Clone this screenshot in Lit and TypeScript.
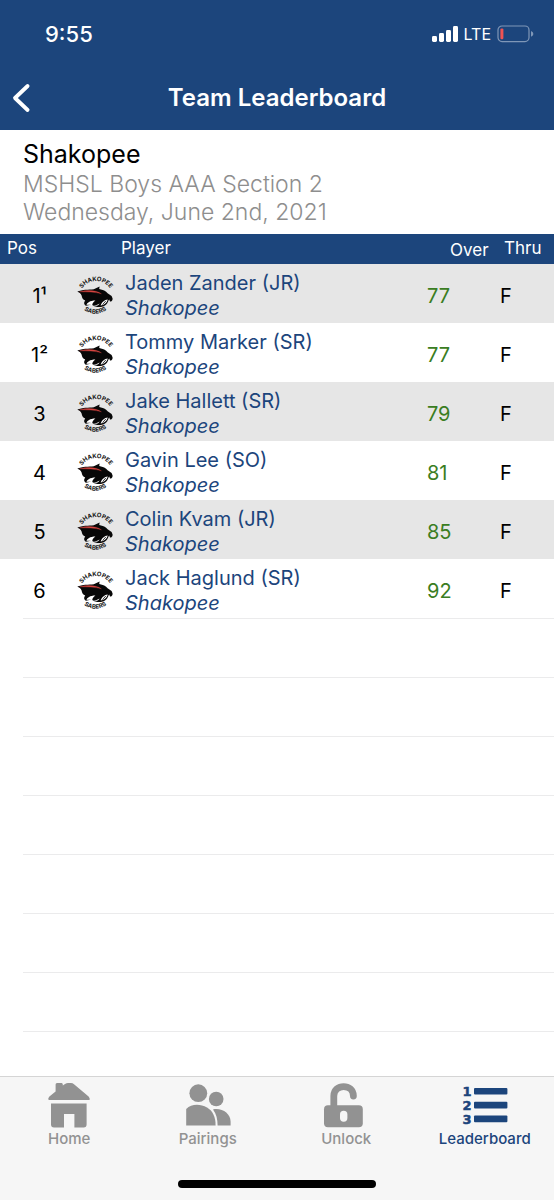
import { LitElement, html, css, svg } from "lit";
import { customElement, property } from "lit/decorators.js";

interface Player {
  pos: string;
  tie?: string;
  name: string;
  team: string;
  over: number;
  thru: string;
}

const PLAYERS: Player[] = [
  { pos: "1", tie: "¹", name: "Jaden Zander (JR)", team: "Shakopee", over: 77, thru: "F" },
  { pos: "1", tie: "²", name: "Tommy Marker (SR)", team: "Shakopee", over: 77, thru: "F" },
  { pos: "3", name: "Jake Hallett (SR)", team: "Shakopee", over: 79, thru: "F" },
  { pos: "4", name: "Gavin Lee (SO)", team: "Shakopee", over: 81, thru: "F" },
  { pos: "5", name: "Colin Kvam (JR)", team: "Shakopee", over: 85, thru: "F" },
  { pos: "6", name: "Jack Haglund (SR)", team: "Shakopee", over: 92, thru: "F" },
];

@customElement("team-logo")
class TeamLogo extends LitElement {
  static styles = css`
    :host { display: block; width: 36px; height: 38px; flex: none; }
    svg { display: block; overflow: visible; }
    .word { font: 700 6px "Inter", sans-serif; fill: #111; text-anchor: middle; }
  `;
  render() {
    return html`<svg width="36" height="38" viewBox="0 0 36 38" aria-hidden="true">
      <path id="top" d="M3.6 14.4 A16.6 16.6 0 0 1 34.4 14.4" fill="none" />
      <path id="bottom" d="M4.6 30.6 A18.4 18.4 0 0 0 32 30.6" fill="none" />
      <text class="word"><textPath href="#top" startOffset="50%">SHAKOPEE</textPath></text>
      <text class="word"><textPath href="#bottom" startOffset="50%">SABERS</textPath></text>
      <path
        d="M0.3 14.6 C5 12.4 12 12.8 16.8 12.2 L22.6 9.4 L22.2 12 C26 12.6 29 14.2 30.6 16.2 L34.6 19 L35.6 21.4 C35.8 23.4 34.6 24.6 33 24.6 L32.2 22.6 C31 24 30.8 27.4 27.6 28.8 C24.2 30.6 19 30.6 15 28 C19 29.4 21.6 28.6 22.6 26.4 C19 29 14.6 28 13.4 27.8 L9 28.8 C6.4 27.4 7 25.2 8.2 23.6 C6 23 5 21.2 4.6 18.6 C3.8 16.4 2 15.4 0.3 14.6 Z"
        fill="#080808" />
      <path d="M9.6 28 C9.8 26 13 23.6 18.4 23.6 C16 25.4 15.2 27 15.2 28.4 C12.6 27.6 11 27.8 9.6 28 Z" fill="#fff" />
      <path d="M30.8 22.4 C27.4 22.6 24.6 25.2 23.6 28.6 C26.8 28 29.8 26 30.8 22.4 Z" fill="#fff" />
      <path d="M28.9 23.9 L25.6 27.6" stroke="#080808" stroke-width="0.8" />
      <path d="M2.6 14.8 C10 12.8 19 13 24.4 16.8 C18 14.8 10 15 2.6 14.8 Z" fill="#d5443f" stroke="#d5443f" stroke-width="0.3" />
    </svg>`;
  }
}

const homeIcon = svg`<svg width="46" height="46" viewBox="0 0 46 46" aria-hidden="true" fill="#929292">
  <path d="M11 1 H15.6 Q16.8 1 16.8 2.6 V3.6 L19 2 Q20.6 1 22 1 H25 Q26.6 1 28 2.2 L42.6 14.4 Q44.2 16 43.6 18 H2.6 Q1.6 16.2 3.4 14.6 L9.6 9.4 V2.6 Q9.6 1 11 1 Z" />
  <path d="M5 21.4 H40.6 V42.4 Q40.6 45.4 37.6 45.4 H28.4 V32 H18 V45.4 H8 Q5 45.4 5 42.4 Z" />
</svg>`;

const pairingsIcon = svg`<svg width="46" height="46" viewBox="0 0 46 46" aria-hidden="true" fill="#929292">
  <circle cx="13.3" cy="11.2" r="8.9" />
  <circle cx="31.2" cy="17" r="7.3" />
  <path d="M1.2 43.6 V27 C6.4 21.8 15 21.6 22 25.6 C28 29.2 30.6 35 30.6 43.6 Z" />
  <path d="M28 27.4 C37 25.6 45.6 31.6 45.6 39.4 V43.6 H32.6 C32.6 37 31.4 31.8 28 27.4 Z" />
</svg>`;

const unlockIcon = svg`<svg width="46" height="46" viewBox="0 0 46 46" aria-hidden="true">
  <path d="M10.8 26 V14 C10.8 1.4 30.4 1.4 30.4 14" fill="none" stroke="#929292" stroke-width="6.8" stroke-linecap="round" />
  <rect x="1" y="23.2" width="38.8" height="22" rx="4" fill="#929292" />
  <rect x="17" y="28.8" width="7.4" height="11" rx="3.7" fill="#f6f6f6" />
</svg>`;

const leaderboardIcon = svg`<svg width="46" height="46" viewBox="0 0 46 46" aria-hidden="true" fill="#1c457c">
  <g font-family="DejaVu Sans, sans-serif" font-weight="700" font-size="13" stroke="#1c457c" stroke-width="0.5" text-anchor="middle">
    <text x="5" y="14">1</text><text x="5" y="28">2</text><text x="5" y="42">3</text>
  </g>
  <rect x="12" y="6" width="33.4" height="6.6" rx="1" />
  <rect x="12" y="19.8" width="33.4" height="6.6" rx="1" />
  <rect x="12" y="33.6" width="33.4" height="6.6" rx="1" />
</svg>`;

const TABS = [
  { label: "Home", icon: homeIcon },
  { label: "Pairings", icon: pairingsIcon },
  { label: "Unlock", icon: unlockIcon },
  { label: "Leaderboard", icon: leaderboardIcon, active: true },
];

@customElement("app-root")
class AppRoot extends LitElement {
  @property({ attribute: false }) players = PLAYERS;

  static styles = css`
    :host {
      display: flex;
      flex-direction: column;
      min-height: 100vh;
      background: #fff;
      color: #000;
      font-family: "Inter", sans-serif;
    }
    .top { padding-bottom: 2px; background: #1c457c; color: #fff; }
    .status {
      display: flex;
      justify-content: space-between;
      align-items: center;
      height: 68px;
      padding: 0 20px 0 45px;
    }
    .time { font-size: 22px; font-weight: 500; }
    .signals { display: flex; align-items: center; gap: 6px; font-size: 16px; }
    .signals svg { display: block; }
    .nav {
      display: grid;
      grid-template-columns: 44px 1fr 44px;
      align-items: center;
      height: 60px;
    }
    .back {
      display: flex;
      padding: 0 0 0 12px;
      border: 0;
      background: none;
    }
    h1 { margin: 0; text-align: center; font-size: 24px; line-height: 30px; font-weight: 600; }
    .event { padding: 8px 23px; font-size: 23px; line-height: 28px; font-weight: 300; color: #8e8e8e; }
    h2 { margin: 0; font-size: 25px; line-height: 32px; font-weight: 400; color: #000; }
    p { margin: 0; }
    table { width: 100%; table-layout: fixed; border-collapse: collapse; }
    .c-pos { width: 77px; }
    .c-over { width: 73px; }
    .c-thru { width: 54px; }
    th {
      height: 28px;
      padding: 0 0 2px;
      background: #1c457c;
      color: #fff;
      font-size: 17px;
      line-height: 20px;
      font-weight: 400;
      text-align: left;
    }
    .h-pos { padding-left: 7px; }
    .h-player { padding-left: 44px; }
    .h-over { padding: 2px 0 0 23px; }
    .h-thru { padding-left: 4px; }
    td { height: 54px; padding: 5px 0 0; font-size: 20px; line-height: 25px; }
    tbody tr:nth-child(odd) { background: #e6e6e6; }
    .pos { padding-left: 2px; text-align: center; }
    .over { color: #3a7d22; }
    .player { display: flex; align-items: center; gap: 12px; color: #1c457c; }
    .player a { display: block; color: inherit; text-decoration: none; }
    .team { display: block; font-style: italic; }
    .blank { flex: 1 1 0; overflow: hidden; margin-left: 23px; }
    .slot { height: 58px; border-top: 1px solid #ebebec; }
    .tabs { background: #f6f6f6; border-top: 1px solid #d5d5d5; }
    .items { display: grid; grid-template-columns: repeat(4, 1fr); height: 98px; align-items: start; }
    .tab {
      display: flex;
      flex-direction: column;
      align-items: center;
      padding-top: 5px;
      gap: 1px;
      color: #929292;
      font-size: 15px;
      line-height: 20px;
      font-weight: 500;
      text-decoration: none;
    }
    .active { color: #1c457c; }
    .indicator { width: 198px; height: 8px; margin: 5px auto 12px; border-radius: 4px; background: #000; }
  `;

  render() {
    return html`
      <header class="top">
        <div class="status">
          <span class="time">9:55</span>
          <span class="signals">
            <svg width="26" height="18" viewBox="0 0 26 18" fill="#fff" aria-hidden="true">
              <rect x="0" y="11" width="5" height="6" rx="1.4" />
              <rect x="7" y="8" width="5" height="9" rx="1.4" />
              <rect x="14" y="5" width="5" height="12" rx="1.4" />
              <rect x="21" y="1" width="5" height="16" rx="1.4" />
            </svg>
            <span>LTE</span>
            <svg width="37" height="18" viewBox="0 0 37 18" aria-hidden="true">
              <rect x="1" y="1" width="31" height="15.6" rx="4" fill="none" stroke="#7f97b7" stroke-width="1.2" />
              <rect x="3.4" y="3.4" width="3" height="10.8" rx="1.2" fill="#ee5353" />
              <path d="M34 6 Q36.4 7.2 36.4 8.9 T34 11.8 Z" fill="#7f97b7" />
            </svg>
          </span>
        </div>
        <div class="nav">
          <button class="back" aria-label="Back">
            <svg width="20" height="30" viewBox="0 0 20 30" fill="none" stroke="#fff" stroke-width="3.8" stroke-linecap="round" stroke-linejoin="round" aria-hidden="true">
              <path d="M15.6 3 L3 15 L15.6 27" />
            </svg>
          </button>
          <h1>Team Leaderboard</h1>
        </div>
      </header>
      <section class="event">
        <h2>Shakopee</h2>
        <p>MSHSL Boys AAA Section 2</p>
        <p>Wednesday, June 2nd, 2021</p>
      </section>
      <table>
        <colgroup>
          <col class="c-pos" /><col /><col class="c-over" /><col class="c-thru" />
        </colgroup>
        <thead>
          <tr>
            <th class="h-pos" scope="col">Pos</th>
            <th class="h-player" scope="col">Player</th>
            <th class="h-over" scope="col">Over</th>
            <th class="h-thru" scope="col">Thru</th>
          </tr>
        </thead>
        <tbody>
          ${this.players.map(
            (p) => html`<tr>
              <td class="pos">${p.pos}${p.tie ?? ""}</td>
              <td>
                <div class="player">
                  <team-logo></team-logo>
                  <a href="#">${p.name}<span class="team">${p.team}</span></a>
                </div>
              </td>
              <td class="over">${p.over}</td>
              <td>${p.thru}</td>
            </tr>`
          )}
        </tbody>
      </table>
      <div class="blank">${Array.from({ length: 8 }, () => html`<div class="slot"></div>`)}</div>
      <footer class="tabs">
        <nav class="items">
          ${TABS.map(
            (t) => html`<a class="tab ${t.active ? "active" : ""}" href="#">${t.icon}<span>${t.label}</span></a>`
          )}
        </nav>
        <div class="indicator"></div>
      </footer>
    `;
  }
}
